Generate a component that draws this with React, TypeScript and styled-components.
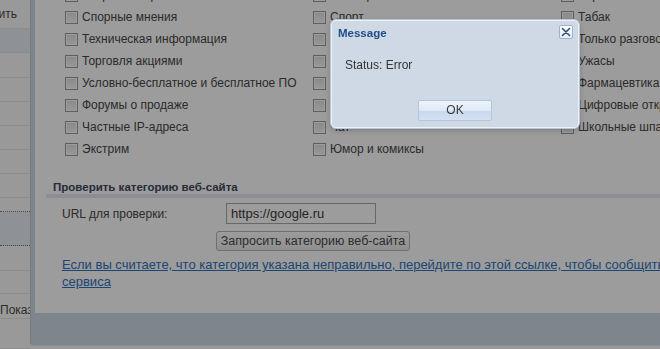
import * as React from 'react'
import styled, { createGlobalStyle } from 'styled-components'

const GlobalStyle = createGlobalStyle`
  html, body {
    margin: 0;
    padding: 0;
    background: #ffffff;
    overflow: hidden;
  }
  body {
    font-family: 'Liberation Sans', Arial, sans-serif;
    font-size: 12px;
    color: #474747;
  }
`

const Page = styled.div`
  display: flex;
  width: 660px;
  height: 349px;
  overflow: hidden;
  background: #fbfbfb;
`

const Sidebar = styled.div`
  flex: none;
  width: 30px;
  overflow: hidden;
  display: flex;
  flex-direction: column;
  background: #fbfbfb;
`

interface SideRowProps {
  h: number,
  selected?: boolean,
  dotted?: boolean,
  align?: 'left' | 'right',
  padTop?: number,
  padRight?: number,
}

const SideRow = styled.div<SideRowProps>`
  flex: none;
  height: ${(p: SideRowProps) => p.h}px;
  box-sizing: border-box;
  white-space: nowrap;
  display: flex;
  align-items: center;
  justify-content: ${(p: SideRowProps) => (p.align === 'right' ? 'flex-end' : 'flex-start')};
  background: ${(p: SideRowProps) => (p.selected ? '#e9edf5' : 'transparent')};
  border-bottom: 1px ${(p: SideRowProps) => (p.dotted ? 'dotted #777' : 'solid #e6e6e6')};
  padding-top: ${(p: SideRowProps) => p.padTop || 0}px;
  padding-right: ${(p: SideRowProps) => p.padRight || 2}px;
  color: #4a4a4a;
`

const MainFrame = styled.div`
  flex: 1;
  min-width: 0;
  height: 346px;
  box-sizing: border-box;
  background: #d0d9e6;
  border-left: 1px solid #c4c8cf;
  border-bottom: 1px solid #e4e8ee;
  border-bottom-left-radius: 4px;
  padding: 0 0 32px 4px;
  overflow: hidden;
`

const Content = styled.div`
  width: 860px;
  height: 313px;
  background: #ffffff;
  overflow: hidden;
`

const CheckList = styled.div`
  display: grid;
  grid-template-columns: repeat(3, 248px);
  grid-auto-rows: 22px;
  margin-top: -16px;
  padding-left: 30px;
`

const CheckItem = styled.label`
  display: flex;
  align-items: center;
  gap: 4px;
  white-space: nowrap;
`

const Box = styled.span`
  flex: none;
  width: 11px;
  height: 11px;
  border: 1px solid #9b9b9b;
  box-shadow: inset 0 0 0 1px #ffffff;
  background: linear-gradient(#e2e2e2, #f7f7f7);
`

const Section = styled.div`
  margin-top: 20px;
`

const SectionTitle = styled.div`
  margin-left: 11px;
  padding-left: 7px;
  line-height: 14px;
  font-weight: bold;
  font-size: 11.5px;
  color: #3e475e;
  border-bottom: 4px solid #e3e8f3;
`

const Form = styled.div`
  padding: 5px 0 0 27px;
`

const UrlRow = styled.div`
  display: grid;
  grid-template-columns: 164px 150px;
  align-items: center;
`

const UrlInput = styled.div`
  height: 21px;
  box-sizing: border-box;
  border: 1px solid #a9a9a9;
  padding: 0 4px;
  line-height: 19px;
  color: #3a3a3a;
  font-size: 13px;
`

const QueryButton = styled.div`
  margin: 7px 0 0 154px;
  width: 194px;
  height: 20px;
  box-sizing: border-box;
  border: 1px solid #b8b8b8;
  border-radius: 3px;
  background: linear-gradient(#ffffff, #ebebeb);
  text-align: center;
  line-height: 18px;
  color: #4a4a4a;
  font-size: 12.5px;
`

const ReportLink = styled.a`
  display: block;
  margin-top: 5px;
  line-height: 17px;
  color: #2f73bd;
  text-decoration: underline;
  font-size: 13px;
  white-space: nowrap;
`

const Dimmer = styled.div`
  position: fixed;
  inset: 0;
  background: rgba(0, 0, 0, 0.39);
`

const Dialog = styled.div`
  position: fixed;
  left: 331px;
  top: 20px;
  width: 248px;
  height: 108px;
  box-sizing: border-box;
  background: #cfd9e5;
  border: 1px solid #edf2f8;
  border-radius: 5px;
  box-shadow: 0 0 0 1px #b9c5d3, 0 2px 6px rgba(0, 0, 0, 0.25);
  display: flex;
  flex-direction: column;
`

const DialogHead = styled.div`
  display: flex;
  justify-content: space-between;
  align-items: flex-start;
  padding: 4px 5px 0 6px;
`

const DialogTitle = styled.div`
  margin-top: 1px;
  font-weight: bold;
  font-size: 11.5px;
  color: #1f4d88;
  line-height: 14px;
`

const CloseButton = styled.div`
  width: 14px;
  height: 14px;
  box-sizing: border-box;
  border: 1px solid #9fb2ca;
  border-radius: 2px;
  background: linear-gradient(#ffffff, #e6edf6);
  display: flex;
  align-items: center;
  justify-content: center;
`

const DialogText = styled.div`
  padding: 18px 0 0 13px;
  line-height: 14px;
  color: #333333;
`

const DialogFoot = styled.div`
  margin-top: auto;
  padding-bottom: 6px;
  display: flex;
  justify-content: center;
`

const OkButton = styled.div`
  width: 74px;
  height: 21px;
  box-sizing: border-box;
  border: 1px solid #b4c6dc;
  border-radius: 2px;
  background: linear-gradient(#eef4fb 0%, #dfe9f6 50%, #c8d8ec 51%, #d3e1f1 100%);
  text-align: center;
  line-height: 19px;
  color: #3b3b3b;
`

const sideRows: SideRowProps[] = [
  { h: 29, align: 'right', padRight: 13 }, { h: 24, selected: true }, { h: 25 }, { h: 24 }, { h: 24 },
  { h: 24 }, { h: 24 }, { h: 24 }, { h: 14, dotted: true }, { h: 34, selected: true, dotted: true },
  { h: 25 }, { h: 23 }, { h: 25, padTop: 8 }, { h: 30 },
]

const categories: string[] = [
  'Азартные игры', 'Поиск работы', 'Стрельба',
  'Спорные мнения', 'Спорт', 'Табак',
  'Техническая информация', 'Социальные сети', 'Только разговоры',
  'Торговля акциями', 'Спам', 'Ужасы',
  'Условно-бесплатное и бесплатное ПО', 'Торренты', 'Фармацевтика',
  'Форумы о продаже', 'Туризм', 'Цифровые открытки',
  'Частные IP-адреса', 'Чат', 'Школьные шпаргалки',
  'Экстрим', 'Юмор и комиксы', '',
]

const App: React.FC = () => {
  return (
    <>
      <GlobalStyle />
      <Page>
        <Sidebar>
          {sideRows.map((row, i) => (
            <SideRow key={i} {...row}>
              {i === 0 ? 'Применить' : i === 12 ? 'Показать' : ''}
            </SideRow>
          ))}
        </Sidebar>
        <MainFrame>
          <Content>
            <CheckList>
              {categories.map((name, i) => (
                name ? (
                  <CheckItem key={i}>
                    <Box />
                    {name}
                  </CheckItem>
                ) : <span key={i} />
              ))}
            </CheckList>
            <Section>
              <SectionTitle>Проверить категорию веб-сайта</SectionTitle>
              <Form>
                <UrlRow>
                  <span>URL для проверки:</span>
                  <UrlInput>https://google.ru</UrlInput>
                </UrlRow>
                <QueryButton>Запросить категорию веб-сайта</QueryButton>
                <ReportLink>
                  Если вы считаете, что категория указана неправильно, перейдите по этой ссылке, чтобы сообщить об ошибке на сайт
                  <br />
                  сервиса
                </ReportLink>
              </Form>
            </Section>
          </Content>
        </MainFrame>
      </Page>
      <Dimmer />
      <Dialog>
        <DialogHead>
          <DialogTitle>Message</DialogTitle>
          <CloseButton>
            <svg width="10" height="10" viewBox="0 0 10 10">
              <path d="M1.5 1.5 L8.5 8.5 M8.5 1.5 L1.5 8.5" stroke="#2c4f7e" strokeWidth="1.6" strokeLinecap="round" />
            </svg>
          </CloseButton>
        </DialogHead>
        <DialogText>Status: Error</DialogText>
        <DialogFoot>
          <OkButton>OK</OkButton>
        </DialogFoot>
      </Dialog>
    </>
  )
}

export default App
